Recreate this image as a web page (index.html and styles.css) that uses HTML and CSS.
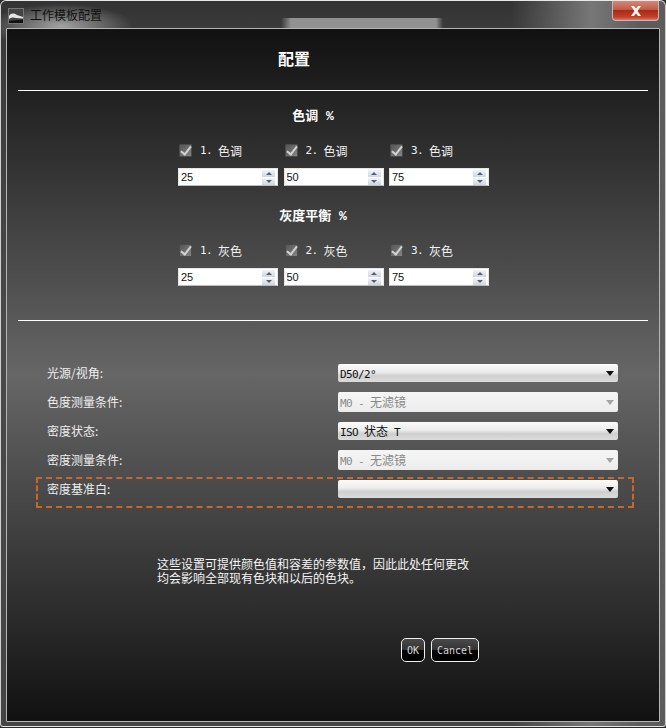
FILE: index.html
```html
<!DOCTYPE html>
<html lang="zh">
<head>
    <meta charset="UTF-8">
    <title>工作模板配置</title>
    <link rel="stylesheet" href="styles.css">
</head>
<body>
    <div class="window">
        <div class="titlebar">
            <svg class="app-icon" width="16" height="16" viewBox="0 0 16 16">
                <rect x="0.5" y="0.5" width="15" height="15" fill="#444" stroke="#777"/>
                <path d="M1 8 C3 5 6 5 9 7 L15 9 L15 10.5 L8 10 C5 9 3 9.5 1 11 Z" fill="#e6e6e6"/>
                <path d="M1 13 L15 11.5 L15 15 L1 15 Z" fill="#111"/>
            </svg>
            <span class="title">工作模板配置</span>
            <div class="close">
                <svg width="12" height="10" viewBox="0 0 12 10">
                    <path d="M1 0 H4 L6 2.6 L8 0 H11 L7.6 5 L11 10 H8 L6 7.4 L4 10 H1 L4.4 5 Z" fill="#f2f2f2"/>
                </svg>
            </div>
        </div>

        <div class="client">
            <h1 class="page-title">配置</h1>
            <hr class="rule">

            <h2 class="group-title">色调 %</h2>
            <div class="field-grid">
                <label class="check"><span class="box"></span><span class="lat">1. </span>色调</label>
                <label class="check"><span class="box"></span><span class="lat">2. </span>色调</label>
                <label class="check"><span class="box"></span><span class="lat">3. </span>色调</label>
                <div class="spin"><input type="text" value="25"><span class="arrows"><i class="up"></i><i class="down"></i></span></div>
                <div class="spin"><input type="text" value="50"><span class="arrows"><i class="up"></i><i class="down"></i></span></div>
                <div class="spin"><input type="text" value="75"><span class="arrows"><i class="up"></i><i class="down"></i></span></div>
            </div>

            <h2 class="group-title second">灰度平衡 %</h2>
            <div class="field-grid">
                <label class="check"><span class="box"></span><span class="lat">1. </span>灰色</label>
                <label class="check"><span class="box"></span><span class="lat">2. </span>灰色</label>
                <label class="check"><span class="box"></span><span class="lat">3. </span>灰色</label>
                <div class="spin"><input type="text" value="25"><span class="arrows"><i class="up"></i><i class="down"></i></span></div>
                <div class="spin"><input type="text" value="50"><span class="arrows"><i class="up"></i><i class="down"></i></span></div>
                <div class="spin"><input type="text" value="75"><span class="arrows"><i class="up"></i><i class="down"></i></span></div>
            </div>

            <hr class="rule lower">

            <div class="form">
                <div class="row">
                    <span class="row-label">光源/视角:</span>
                    <div class="select"><span class="lat">D50/2°</span></div>
                </div>
                <div class="row">
                    <span class="row-label">色度测量条件:</span>
                    <div class="select disabled"><span class="lat">M0 - </span>无滤镜</div>
                </div>
                <div class="row">
                    <span class="row-label">密度状态:</span>
                    <div class="select"><span class="lat">ISO </span>状态<span class="lat"> T</span></div>
                </div>
                <div class="row">
                    <span class="row-label">密度测量条件:</span>
                    <div class="select disabled"><span class="lat">M0 - </span>无滤镜</div>
                </div>
                <div class="row focus">
                    <span class="row-label">密度基准白:</span>
                    <div class="select"></div>
                </div>
            </div>

            <p class="note">这些设置可提供颜色值和容差的参数值，因此此处任何更改<br>均会影响全部现有色块和以后的色块。</p>

            <div class="buttons">
                <button class="btn ok">OK</button>
                <button class="btn cancel">Cancel</button>
            </div>
        </div>
    </div>
</body>
</html>
```

FILE: styles.css
```css
* {
    margin: 0;
    padding: 0;
    box-sizing: border-box;
}

body {
    width: 666px;
    height: 728px;
    overflow: hidden;
    background: #2a2a2a;
    font-family: "Noto Sans CJK SC", "Liberation Sans", sans-serif;
    font-size: 12px;
    color: #f2f2f2;
}

.lat {
    font-family: "DejaVu Sans Mono", monospace;
    font-size: 11px;
    letter-spacing: -0.62px;
}

.window {
    height: 727px;
    display: flex;
    flex-direction: column;
    padding: 0 5px 4px;
    border: 1px solid #cfcfcf;
    border-bottom-color: #e4e4e4;
    border-top-color: #e8e8e8;
    border-radius: 6px 6px 3px 3px;
    background:
        radial-gradient(ellipse 72px 22px at 60px 25px, #a2a2a2 0%, rgba(150,150,150,0) 100%),
        linear-gradient(90deg, rgba(0,0,0,0) 280px, rgba(175,175,175,0.75) 290px, rgba(175,175,175,0.75) 435px, rgba(0,0,0,0) 442px) 0 17px / 100% 12px no-repeat,
        linear-gradient(90deg, rgba(0,0,0,0) 510px, #777 590px, #5c5c5c 640px),
        linear-gradient(180deg, #333 0, #3a3a3a 28px, #4a4a4a 330px, #444 720px);
}

.titlebar {
    flex: none;
    height: 27px;
    display: flex;
    align-items: flex-start;
}

.app-icon {
    margin: 7px 0 0 2px;
}

.title {
    margin: 4px 0 0 6px;
    color: #111;
    line-height: 20px;
}

.close {
    margin-left: auto;
    margin-right: 1px;
    width: 47px;
    height: 20px;
    display: flex;
    align-items: center;
    justify-content: center;
    border: 1px solid #bbb;
    border-top: 0;
    border-radius: 0 0 4px 4px;
    background: linear-gradient(180deg, #d08a7c 0, #c45a45 45%, #a92a15 50%, #c4402a 85%, #d87a66 100%);
}

.client {
    flex: 1;
    border: 1px solid #b5b5b5;
    border-radius: 1px;
    background: linear-gradient(180deg, #111 0%, #666 50%, #111 100%);
}

.page-title {
    height: 61px;
    padding-right: 78px;
    text-align: center;
    font-size: 16px;
    font-weight: 700;
    line-height: 58px;
    color: #fff;
}

.rule {
    height: 1px;
    margin: 0 11px;
    border: 0;
    background: #fff;
}

.rule.lower {
    margin-top: 34px;
}

.group-title {
    height: 20px;
    margin-top: 16px;
    padding-right: 40px;
    text-align: center;
    font-family: "Liberation Mono", "Noto Sans CJK SC", monospace;
    font-size: 13px;
    font-weight: 700;
    line-height: 20px;
    color: #fff;
}

.group-title.second {
    margin-top: 21px;
}

.field-grid {
    display: grid;
    grid-template-columns: repeat(3, 100px);
    column-gap: 5.5px;
    row-gap: 8px;
    justify-content: center;
    margin-top: 13px;
    padding-left: 1px;
}

.check {
    height: 20px;
    display: flex;
    align-items: center;
    white-space: pre;
}

.box {
    position: relative;
    width: 13px;
    height: 13px;
    margin: 0 8px 0 1px;
    border: 1px solid #4a4a4a;
    border-radius: 1px;
    background: linear-gradient(135deg, #555, #858585);
}

.box::after {
    content: "";
    position: absolute;
    left: 3px;
    top: -1px;
    width: 4px;
    height: 9px;
    border: solid #d2d2d2;
    border-width: 0 2px 2px 0;
    transform: rotate(38deg);
}

.spin {
    height: 18px;
    display: flex;
    align-items: center;
    padding-right: 2px;
    background: #fff;
    border: 1px solid #e6e6e6;
    border-bottom-color: #bbb;
}

.spin input {
    flex: 1;
    min-width: 0;
    height: 16px;
    padding-left: 2px;
    border: 0;
    outline: 0;
    background: transparent;
    font-family: "Liberation Sans", sans-serif;
    font-size: 11px;
    color: #111;
}

.arrows {
    flex: none;
    width: 13px;
    height: 15px;
    display: flex;
    flex-direction: column;
    gap: 1px;
}

.arrows i {
    flex: 1;
    display: flex;
    align-items: center;
    justify-content: center;
    background: linear-gradient(180deg, #f1f4f8, #cfd6e0);
}

.up::after,
.down::after {
    content: "";
    border-left: 3px solid transparent;
    border-right: 3px solid transparent;
}

.up::after {
    border-bottom: 3px solid #5a6070;
}

.down::after {
    border-top: 3px solid #5a6070;
}

.form {
    margin: 40px 25px 0 29px;
}

.row {
    height: 29px;
    display: flex;
    align-items: flex-start;
    padding: 2px 14px 0 10px;
    border: 1px solid transparent;
}

.row.focus {
    height: 31px;
    padding: 1px 13px 0 9px;
    border: 2px dashed #c8672a;
}

.row-label {
    width: 291px;
    line-height: 18px;
    color: #eee;
}

.select {
    position: relative;
    width: 280px;
    height: 18px;
    padding-left: 2px;
    border-radius: 2px;
    background: linear-gradient(180deg, #fbfbfb 0, #ececec 45%, #cfcfcf 65%, #dcdcdc 100%);
    line-height: 18px;
    white-space: pre;
    color: #111;
}

.select::after {
    content: "";
    position: absolute;
    right: 4px;
    top: 7px;
    border-left: 4.5px solid transparent;
    border-right: 4.5px solid transparent;
    border-top: 5px solid #111;
}

.select.disabled {
    height: 20px;
    margin-top: -1px;
    line-height: 20px;
    background: linear-gradient(180deg, #f6f6f6, #ececec);
    color: #8a8a8a;
}

.select.disabled::after {
    top: 8px;
    border-top-color: #a5a5a5;
}

.note {
    margin: 49px 0 0 150px;
    line-height: 14px;
    color: #f4f4f4;
}

.buttons {
    display: flex;
    justify-content: flex-end;
    gap: 6px;
    margin-top: 53px;
    padding-right: 180px;
}

.btn {
    height: 24px;
    border: 1px solid #eee;
    border-radius: 5px;
    background: linear-gradient(180deg, #4a4a4a 0, #333 50%, #000 52%, #000 100%);
    font-family: "DejaVu Sans Mono", monospace;
    font-size: 10px;
    color: #d8d8d8;
}

.btn.ok {
    width: 24px;
}

.btn.cancel {
    width: 48px;
}
```
